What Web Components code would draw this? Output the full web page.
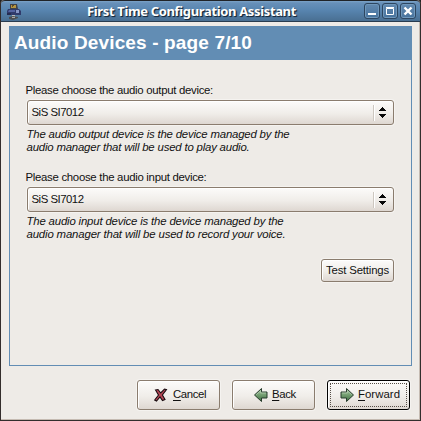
<!DOCTYPE html>
<html lang="en"><head><meta charset="utf-8"><title>First Time Configuration Assistant</title>
<style>
body{margin:0;width:421px;height:421px;overflow:hidden;font:11.4px/13px "Liberation Sans",Arial,sans-serif;color:#111;background:#222}
</style></head><body>
<assistant-window></assistant-window>
<script>
function define(name,html,setup){
  const t=document.createElement('template');t.innerHTML=html;
  customElements.define(name,class extends HTMLElement{
    connectedCallback(){
      if(this.shadowRoot)return;
      this.attachShadow({mode:'open'}).append(t.content.cloneNode(true));
      if(setup)setup(this);
    }
  });
}
// One line of text, spaced evenly to fill the width given by its attribute.
define('text-line','<style>:host{display:block;white-space:nowrap;width:max-content}</style><slot></slot>',el=>{
  const w=+el.getAttribute('w'),n=el.textContent.length;
  el.style.letterSpacing=((w-el.getBoundingClientRect().width)/n)+'px';
});
define('window-button',`<style>:host{display:block;box-sizing:border-box;width:16px;height:16px;border:1px solid #2d4660;border-radius:3px;background:linear-gradient(#6289b0,#47739d);box-shadow:inset 0 0 0 1px #6f97bb}svg{display:block}</style>
<svg width="14" height="14"><g fill="none" stroke="#fff" stroke-width="2"></g></svg>`,el=>{
  const p={min:'<path d="M3 10h8"/>',max:'<path stroke-width="1" d="M3.5 4.5h7v6h-7zM3 3.5h8"/>',close:'<path stroke-width="2.4" d="M3.500 3.500l7 7M10.500 3.500l-7 7"/>'};
  el.shadowRoot.querySelector('g').innerHTML=p[el.getAttribute('kind')];
});
define('title-bar',`<style>:host{display:flex;box-sizing:border-box;height:22px;border-top:1px solid #202327;border-bottom:1px solid #293c50;border-radius:4px 4px 0 0;background:linear-gradient(#7ba3c8 0,#6790b9 2px,#5885b0 9px,#496f92 20px);padding:2px 4px 0 5px;align-items:flex-start}
svg{flex:none}.t{margin:0 0 0 66px;flex:1;color:#fff;font:bold 13px/16px "Noto Sans","Open Sans",sans-serif;text-shadow:1px 1px 1px #17283a,1px 1px 0 #29435c}.b{display:flex;gap:2px}</style>
<svg width="15" height="17" viewBox="0 0 15 17"><path d="M4 1h7l1 5H4z" fill="#40424a"/><path d="M5 2h5v3H5z" fill="#b59441"/><path d="M6 2h2v1H7v1H6z" fill="#5c4c2d"/><path d="M2 6h11l2 2v4H1V8z" fill="#303b6b"/><path d="M3 7h6v2H2z" fill="#5363a0"/><path d="M10 7h3v3h-3z" fill="#8796c5"/><path d="M1 10h4v2H1z" fill="#252b50"/><path d="M6 12h3v2H6z" fill="#bbb"/><path d="M3 14l4-1 5 1v1l-5 2-4-1z" fill="#4b4e52"/><path d="M6 14h3v1H6z" fill="#aaa"/></svg>
<div class="t"><text-line w="209">First Time Configuration Assistant</text-line></div>
<div class="b"><window-button kind="min"></window-button><window-button kind="max"></window-button><window-button kind="close"></window-button></div>`);
define('combo-box',`<style>:host{display:flex;box-sizing:border-box;width:367px;height:25px;border:1px solid #8a7c6e;border-radius:3px;background:linear-gradient(#fcfbfa,#f0ede9 55%,#ded7d1);box-shadow:inset 1px 1px #fff,0 0 0 1px #f5f3f0;padding:3px 6px 3px 4px;align-items:center;justify-content:space-between}
.a{display:flex;height:16px;border-left:1px solid #cdc7c0;box-shadow:inset 1px 0 #fff;padding-left:5px;align-items:center}svg{display:block}</style>
<slot></slot><div class="a"><svg width="8" height="11"><path d="M3 0h1v1h1v1h1v1h1v1H0V3h1V2h1V1h1zM0 7h7v1H6v1H5v1H4v1H3v-1H2V9H1V8H0z" fill="#080808"/></svg></div>`);
define('push-button',`<style>:host{display:flex;box-sizing:border-box;width:83px;height:30px;border:1px solid #8a7c6e;border-radius:3px;background:linear-gradient(#fcfbfa,#f0ede9 55%,#ded7d1);box-shadow:inset 1px 1px #fff,0 0 0 1px #f5f3f0;align-items:center;position:relative}
:host([small]){width:73px;height:23px;padding-left:4px}
:host([focused]){border-color:#000}
:host([focused])::after{content:"";position:absolute;inset:2px;border:1px dotted #574f48}
</style><slot name="icon"></slot><slot></slot>`);
define('step-icon',`<style>:host{display:block;width:16px;height:16px}:host(.flip){transform:scaleX(-1)}svg{display:block}</style><svg width="16" height="16"><defs><linearGradient id="g" x2="0" y2="1"><stop stop-color="#a8c5a4"/><stop offset=".5" stop-color="#739e70"/><stop offset="1" stop-color="#3f6b43"/></linearGradient></defs><g></g></svg>`,el=>{
  el.shadowRoot.querySelector('g').innerHTML=el.getAttribute('kind')==='x'
   ?'<path d="M2.500 3l2.500-.5L7.700 6 11.500 2l2 .6L9.400 8l2.600 4.500-2.500 1L7 10l-3.500 4-1.800-1L5.500 8z" fill="#b64655" stroke="#190c10" stroke-width="1.100"/>'
   :'<path d="M1.500 8L8.500 1.500V5h5.500v6H8.500v3.500z" fill="url(#g)" stroke="#273c2c"/><path d="M3.300 7.600L7.600 3.800V6h5.300" fill="none" stroke="#b8d0b5" stroke-width=".7"/>';
});
define('device-field',`<style>:host{display:block;height:87px}combo-box{margin:3px 0 3px 1px}.h{margin-left:1px;font-style:italic}</style>
<slot name="label"></slot><combo-box><text-line w="52">SiS SI7012</text-line></combo-box><div class="h"><slot name="help"></slot></div>`);
define('assistant-page',`<style>:host{display:block;box-sizing:border-box;width:403px;height:340px;border:1px solid #628db4}
header{height:33px;background:#628db4;color:#fff;font:bold 19px/31px "Liberation Sans",Arial,sans-serif;padding-left:4px}
main{padding:24px 0 0 15.5px}device-field{margin-right:0}push-button{margin:1px 0 0 295.500px}</style>
<header><text-line w="238">Audio Devices - page 7/10</text-line></header>
<main><device-field><text-line slot="label" w="187.500">Please choose the audio output device:</text-line><text-line slot="help" w="263">The audio output device is the device managed by the</text-line><text-line slot="help" w="223">audio manager that will be used to play audio.</text-line></device-field>
<device-field><text-line slot="label" w="181">Please choose the audio input device:</text-line><text-line slot="help" w="257">The audio input device is the device managed by the</text-line><text-line slot="help" w="259">audio manager that will be used to record your voice.</text-line></device-field>
<push-button small><text-line w="63">Test Settings</text-line></push-button></main>`);
define('assistant-window',`<style>:host{display:block;box-sizing:border-box;width:421px;height:421px;background:#eeebe7;border:1px solid #332d2c;border-top:0;border-radius:4px 4px 0 0;box-shadow:inset -1px -1px #c5bbb2}
assistant-page{margin:4px 0 0 8px}footer{display:flex;gap:12px;margin:14px 0 0 136px}u{text-underline-offset:2px;text-decoration-thickness:1px}
.x{margin:0 4px 0 15px}.b{margin:0 3px 0 20px}.f{margin:0 3px 0 11px}footer text-line{margin-top:-1px}</style>
<title-bar></title-bar><assistant-page></assistant-page>
<footer><push-button><step-icon slot="icon" kind="x" class="x"></step-icon><text-line w="33"><u>C</u>ancel</text-line></push-button>
<push-button><step-icon slot="icon" kind="arrow" class="b"></step-icon><text-line w="24"><u>B</u>ack</text-line></push-button>
<push-button focused><step-icon slot="icon" kind="arrow" class="f flip"></step-icon><text-line w="42"><u>F</u>orward</text-line></push-button></footer>`);
</script></body></html>
